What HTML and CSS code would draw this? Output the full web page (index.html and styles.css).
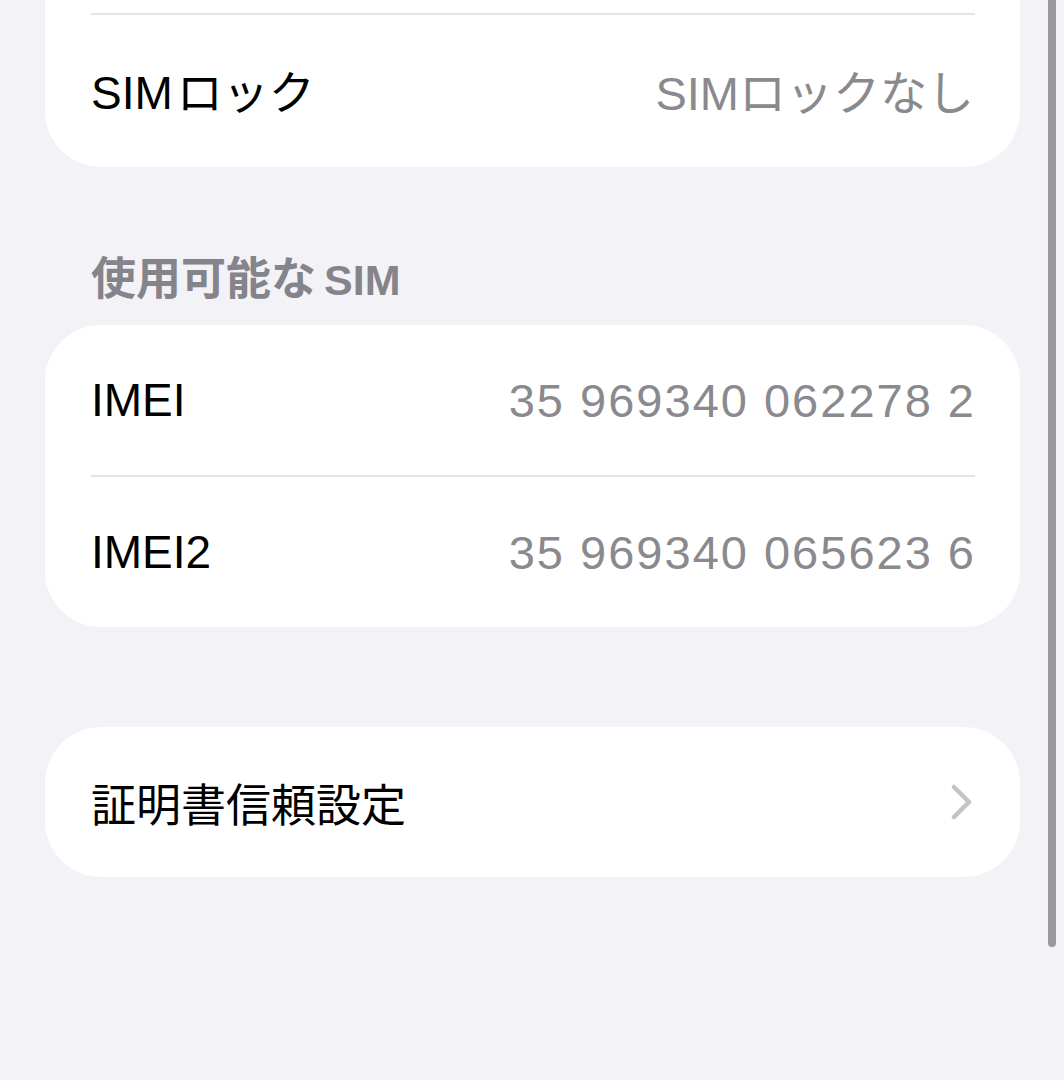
FILE: index.html
```html
<!DOCTYPE html>
<html>

<head>
  <meta charset="utf-8" />
  <meta name="viewport" content="width=device-width, initial-scale=1" />
  <title>情報</title>
  <link rel="stylesheet" href="styles.css">
</head>

<body>
  <div class="page">
    <!-- card cut off at the top of the screen -->
    <div class="card card-cut">
      <div class="divider"></div>
      <div class="row">
        <span class="label">SIM<span class="jp-gap">ロック</span></span>
        <span class="value">SIMロックなし</span>
      </div>
    </div>

    <h2 class="section-title">使用可能な<span class="latin-gap">SIM</span></h2>
    <div class="card">
      <div class="row">
        <span class="label">IMEI</span>
        <span class="value value-num">35 969340 062278 2</span>
      </div>
      <div class="divider"></div>
      <div class="row">
        <span class="label">IMEI2</span>
        <span class="value value-num">35 969340 065623 6</span>
      </div>
    </div>

    <div class="card card-link">
      <div class="row">
        <span class="label label-jp">証明書信頼設定</span>
        <svg class="chevron" width="22" height="36" viewBox="0 0 22 36">
          <path d="M3 3 L18 18 L3 33" fill="none" stroke="#c4c4c7" stroke-width="4.5" stroke-linecap="round" stroke-linejoin="round" />
        </svg>
      </div>
    </div>
  </div>

  <div class="scrollbar"></div>
</body>

</html>
```

FILE: styles.css
```css
html,
body {
  margin: 0;
  height: 100%;
}

body {
  background: #f2f2f7;
  color: #000;
  font-family: "Liberation Sans", "Noto Sans CJK JP", sans-serif;
  overflow: hidden;
  position: relative;
}

.page {
  padding: 0 44px 0 45px;
}

.card {
  background: #fff;
  border-radius: 56px;
  padding: 0 46px;
}

.card-cut {
  border-radius: 0 0 56px 56px;
  padding-top: 13px;
}

.card-link {
  margin-top: 100px;
}

.divider {
  height: 2px;
  background: #e3e3e8;
  margin-right: -1px;
}

.row {
  height: 150px;
  display: flex;
  align-items: center;
  justify-content: space-between;
}

.card-cut .row {
  height: 152px;
  padding-bottom: 4px;
  box-sizing: border-box;
}

.label {
  font-size: 46px;
}

.label-jp {
  font-size: 45px;
}

.value {
  font-size: 47px;
  color: #8a8a8e;
}

.value-num {
  letter-spacing: 2px;
  margin-right: -2px;
}

.jp-gap {
  margin-left: 4px;
}

.section-title {
  margin: 0;
  height: 158px;
  box-sizing: border-box;
  display: flex;
  align-items: flex-end;
  padding: 0 0 20px 46px;
  font-size: 45px;
  line-height: 50px;
  font-weight: bold;
  color: #84848a;
}

.latin-gap {
  margin-left: 8px;
  font-size: 43px;
}

.chevron {
  display: block;
  margin-right: 1px;
}

.scrollbar {
  position: absolute;
  top: -6px;
  left: 1048px;
  width: 8px;
  height: 953px;
  border-radius: 4px;
  background: #9a999f;
}
```
